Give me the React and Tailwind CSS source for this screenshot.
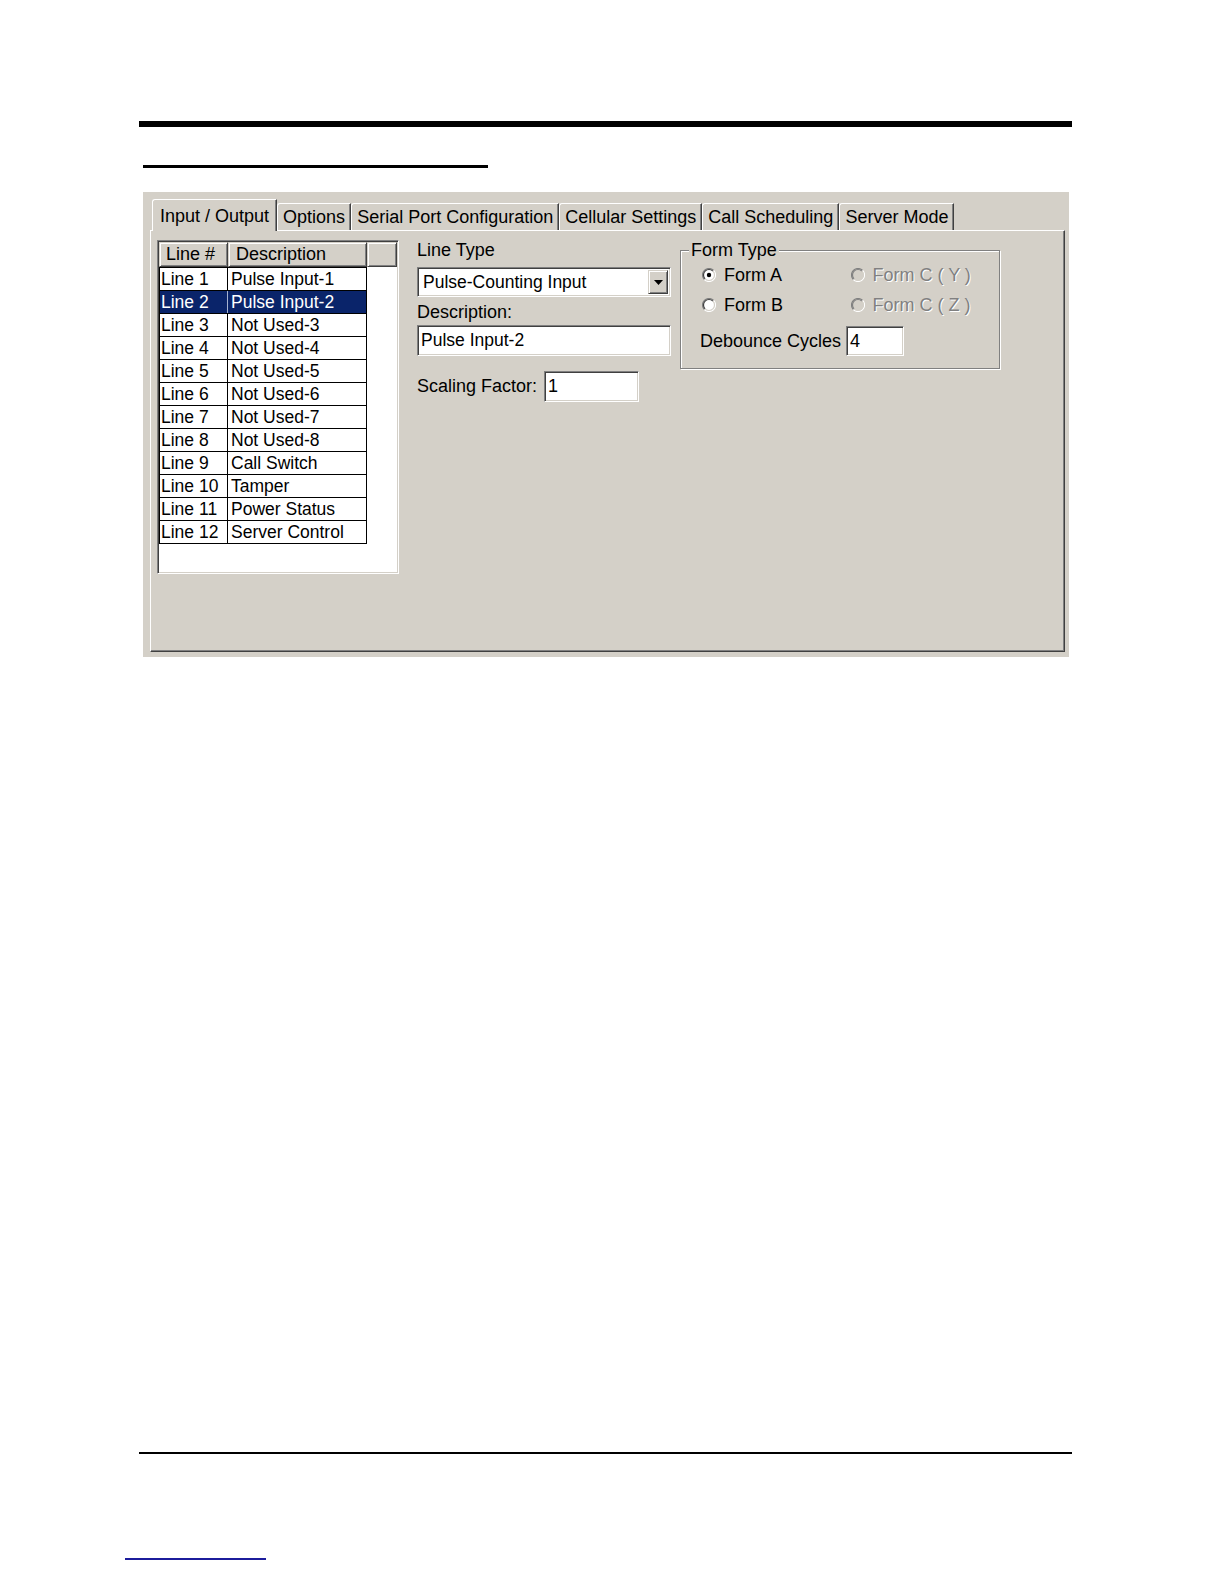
import React from 'react';

// classic win2k bevels
const sunken =
  'border border-t-[#808080] border-l-[#808080] border-b-white border-r-white shadow-[inset_1px_1px_0_#404040,inset_-1px_-1px_0_#d4d0c8]';
const raised =
  'border border-t-[#d4d0c8] border-l-[#d4d0c8] border-r-[#404040] border-b-[#404040] shadow-[inset_1px_1px_0_white,inset_-1px_-1px_0_#808080]';

const tabs = [
  'Input / Output',
  'Options',
  'Serial Port Configuration',
  'Cellular Settings',
  'Call Scheduling',
  'Server Mode',
];

const lines = [
  ['Line 1', 'Pulse Input-1'],
  ['Line 2', 'Pulse Input-2'],
  ['Line 3', 'Not Used-3'],
  ['Line 4', 'Not Used-4'],
  ['Line 5', 'Not Used-5'],
  ['Line 6', 'Not Used-6'],
  ['Line 7', 'Not Used-7'],
  ['Line 8', 'Not Used-8'],
  ['Line 9', 'Call Switch'],
  ['Line 10', 'Tamper'],
  ['Line 11', 'Power Status'],
  ['Line 12', 'Server Control'],
];

function Tab({ label, active }) {
  if (active) {
    return (
      <div className="relative z-10 -mb-px flex h-[32px] items-start rounded-tl-[3px] border-l border-t border-r border-l-white border-t-white border-r-[#404040] bg-[#d4d0c8] px-[7px] pt-[3px] shadow-[inset_-1px_0_0_#808080]">
        {label}
      </div>
    );
  }
  return (
    <div className="flex h-[27px] items-center rounded-tl-[3px] border-l border-t border-r border-l-white border-t-white border-r-[#404040] bg-[#d4d0c8] px-[5px] pt-[1px] shadow-[inset_-1px_0_0_#808080]">
      {label}
    </div>
  );
}

function Radio({ checked, disabled }) {
  return (
    <svg width="14" height="14" viewBox="0 0 14 14" className="shrink-0">
      <circle cx="7" cy="7" r="6" fill={disabled ? '#d4d0c8' : 'white'} />
      <path d="M2.4 11.6 A6.5 6.5 0 0 1 11.6 2.4" fill="none" stroke="#808080" strokeWidth="1.2" />
      <path d="M11.6 2.4 A6.5 6.5 0 0 1 2.4 11.6" fill="none" stroke="white" strokeWidth="1.2" />
      <path d="M3.1 10.9 A5.5 5.5 0 0 1 10.9 3.1" fill="none" stroke={disabled ? '#808080' : '#404040'} strokeWidth="1.2" />
      <path d="M10.9 3.1 A5.5 5.5 0 0 1 3.1 10.9" fill="none" stroke="#d4d0c8" strokeWidth="1.2" />
      {checked && <circle cx="7" cy="7" r="2.2" fill="black" />}
    </svg>
  );
}

function RadioItem({ label, checked, disabled }) {
  return (
    <div className="flex h-[20px] w-[156px] items-center gap-[8px]">
      <Radio checked={checked} disabled={disabled} />
      <span
        className={
          disabled
            ? 'text-[#808080] [text-shadow:1px_1px_0_white]'
            : 'text-black'
        }
      >
        {label}
      </span>
    </div>
  );
}

function LineList() {
  return (
    <div className={`h-[334px] w-[242px] shrink-0 bg-white ${sunken} p-px`}>
      <div className="flex h-[25px] text-[18px]">
        <div className={`w-[69px] bg-[#d4d0c8] pl-[6px] leading-[22px] ${raised}`}>Line #</div>
        <div className={`w-[139px] bg-[#d4d0c8] pl-[7px] leading-[22px] ${raised}`}>Description</div>
        <div className={`flex-1 bg-[#d4d0c8] ${raised}`} />
      </div>
      <div className="w-[208px] border-l border-t border-black text-[17.5px]">
        {lines.map(([num, desc], i) => {
          const sel = i === 1;
          return (
            <div
              key={num}
              className={`flex h-[23px] border-b border-black leading-[22px] ${
                sel ? 'bg-[#0a246a] text-white' : ''
              }`}
            >
              <div className={`w-[68px] border-r pl-[1px] ${sel ? 'border-[#a6b2d0]' : 'border-black'}`}>{num}</div>
              <div className="flex-1 border-r border-black pl-[3px]">{desc}</div>
            </div>
          );
        })}
      </div>
    </div>
  );
}

function Middle() {
  return (
    <div className="ml-[18px] flex w-[254px] flex-col text-[18px]">
      <div className="h-[20px] leading-[20px]">Line Type</div>
      <div className={`mt-[7px] flex h-[30px] items-stretch bg-white ${sunken} p-[2px]`}>
        <div className="flex-1 pl-[3px] text-[17.5px] leading-[25px]">Pulse-Counting Input</div>
        <div className={`flex w-[20px] items-center justify-center bg-[#d4d0c8] ${raised}`}>
          <svg width="9" height="5" viewBox="0 0 9 5">
            <path d="M0 0 H9 L4.5 5 Z" fill="black" />
          </svg>
        </div>
      </div>
      <div className="mt-[5px] h-[20px] leading-[20px]">Description:</div>
      <div className={`mt-[3px] h-[31px] bg-white pl-[3px] text-[17.5px] leading-[29px] ${sunken}`}>
        Pulse Input-2
      </div>
      <div className="mt-[15px] flex h-[31px] items-center">
        <span>Scaling Factor:</span>
        <div className={`ml-[7px] h-[31px] w-[95px] bg-white pl-[3px] leading-[29px] ${sunken}`}>1</div>
      </div>
    </div>
  );
}

function FormType() {
  return (
    <div className="relative ml-[9px] mt-[10px] h-[119px] w-[320px] border border-[#808080] shadow-[inset_1px_1px_0_white,1px_1px_0_white] text-[18px]">
      <div className="absolute -top-[11px] left-[8px] bg-[#d4d0c8] px-[2px] leading-[20px]">Form Type</div>
      <div className="flex flex-col pl-[21px] pt-[14px]">
        <div className="flex">
          <RadioItem label="Form A" checked />
          <RadioItem label="Form C ( Y )" disabled />
        </div>
        <div className="mt-[10px] flex">
          <RadioItem label="Form B" />
          <RadioItem label="Form C ( Z )" disabled />
        </div>
      </div>
      <div className="mt-[11px] flex items-center pl-[19px]">
        <span>Debounce Cycles</span>
        <div className={`ml-[5px] h-[30px] w-[58px] bg-white pl-[3px] leading-[28px] ${sunken}`}>4</div>
      </div>
    </div>
  );
}

function Dialog() {
  return (
    <div className="ml-[143px] mt-[24px] h-[465px] w-[926px] bg-[#d4d0c8] pl-[7px] pt-[7px] text-black">
      <div className="flex items-end pl-[2px] text-[18px]">
        {tabs.map((t, i) => (
          <Tab key={t} label={t} active={i === 0} />
        ))}
      </div>
      <div className="flex h-[422px] w-[915px] items-start border border-l-white border-t-white border-r-[#404040] border-b-[#404040] pl-[6px] pt-[9px] shadow-[inset_-1px_-1px_0_#808080]">
        <LineList />
        <Middle />
        <FormType />
      </div>
    </div>
  );
}

export default function App() {
  return (
    <div className="flex h-[1584px] w-[1224px] flex-col bg-white font-['Liberation_Sans',Arial,sans-serif]">
      <div className="ml-[139px] mt-[121px] h-[6px] w-[933px] bg-black" />
      <div className="ml-[143px] mt-[38px] h-[3px] w-[345px] bg-black" />
      <Dialog />
      <div className="ml-[139px] mt-[795px] h-[2px] w-[933px] bg-black" />
      <div className="ml-[125px] mt-[104px] h-[2px] w-[141px] bg-[#1c1c9c]" />
    </div>
  );
}
